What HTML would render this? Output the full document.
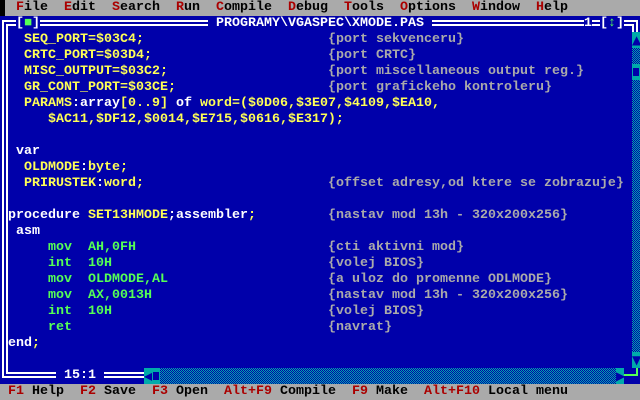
<!DOCTYPE html>
<html><head><meta charset="utf-8"><style>
body{margin:0;width:640px;height:400px;background:#0000AA;overflow:hidden;position:relative;font-family:"Liberation Mono","DejaVu Sans Mono",monospace;font-weight:bold;font-size:13.333px;}
.r{position:absolute;left:0;height:16px;line-height:16px;white-space:pre;}
.y{color:#FFFF55}.w{color:#FFFFFF}.g{color:#AAAAAA}.n{color:#55FF55}.red{color:#AA0000}.k{color:#000}
.ln{position:absolute;background:#fff;}
.chk{position:absolute;background-color:#0000AA;background-image:repeating-conic-gradient(#00AAAA 0 25%,#0000AA 0 50%);background-size:2px 2px;}
.cy{position:absolute;background:#00AAAA;color:#0000AA;text-align:center;line-height:16px;font-size:12px;font-family:"DejaVu Sans",sans-serif;}
</style></head><body>
<div class="r" style="top:0;width:640px;background:#AAAAAA;color:#000"><span style="position:absolute;left:16px"><span class="red">F</span>ile  <span class="red">E</span>dit  <span class="red">S</span>earch  <span class="red">R</span>un  <span class="red">C</span>ompile  <span class="red">D</span>ebug  <span class="red">T</span>ools  <span class="red">O</span>ptions  <span class="red">W</span>indow  <span class="red">H</span>elp</span></div>
<div style="position:absolute;left:0;top:0;width:5px;height:16px;background:#000"></div>

<!-- frame -->
<div class="ln" style="left:2px;top:20px;width:14px;height:2px"></div>
<div class="ln" style="left:6px;top:24px;width:10px;height:2px"></div>
<div class="ln" style="left:40px;top:20px;width:168px;height:2px"></div>
<div class="ln" style="left:40px;top:24px;width:168px;height:2px"></div>
<div class="ln" style="left:432px;top:20px;width:152px;height:2px"></div>
<div class="ln" style="left:432px;top:24px;width:152px;height:2px"></div>
<div class="ln" style="left:592px;top:20px;width:8px;height:2px"></div>
<div class="ln" style="left:592px;top:24px;width:8px;height:2px"></div>
<div class="ln" style="left:624px;top:20px;width:14px;height:2px"></div>
<div class="ln" style="left:624px;top:24px;width:10px;height:2px"></div>
<div class="ln" style="left:636px;top:20px;width:2px;height:12px"></div>
<div class="ln" style="left:632px;top:24px;width:2px;height:8px"></div>
<div class="ln" style="left:2px;top:20px;width:2px;height:358px"></div>
<div class="ln" style="left:6px;top:24px;width:2px;height:350px"></div>
<div class="ln" style="left:2px;top:376px;width:54px;height:2px"></div>
<div class="ln" style="left:6px;top:372px;width:50px;height:2px"></div>
<div class="ln" style="left:104px;top:376px;width:40px;height:2px"></div>
<div class="ln" style="left:104px;top:372px;width:40px;height:2px"></div>
<div class="r w" style="top:16px;left:16px">[<span class="n">■</span>]</div>
<div class="r w" style="top:16px;left:208px"> PROGRAMY\VGASPEC\XMODE.PAS </div>
<div class="r w" style="top:16px;left:584px">1</div>
<div class="r w" style="top:16px;left:600px">[<span class="n">↕</span>]</div>
<div class="r w" style="top:368px;left:56px"> 15:1 </div>

<!-- scrollbars -->
<div class="chk" style="left:632px;top:48px;width:8px;height:304px"></div>
<div class="cy" style="left:632px;top:32px;width:8px;height:16px">▲</div>
<div class="cy" style="left:632px;top:64px;width:8px;height:16px"><div style="position:absolute;left:1px;top:4px;width:6px;height:8px;background:#0000AA"></div></div>
<div class="cy" style="left:632px;top:352px;width:8px;height:16px">▼</div>
<div class="chk" style="left:144px;top:368px;width:480px;height:16px"></div>
<div class="cy" style="left:144px;top:368px;width:8px;height:16px">◀</div>
<div class="cy" style="left:152px;top:368px;width:8px;height:16px"><div style="position:absolute;left:1px;top:4px;width:6px;height:8px;background:#0000AA"></div></div>
<div class="cy" style="left:616px;top:368px;width:8px;height:16px">▶</div>
<div style="position:absolute;left:624px;top:374px;width:14px;height:2px;background:#55FF55"></div>
<div style="position:absolute;left:636px;top:368px;width:2px;height:8px;background:#55FF55"></div>

<!-- code -->
<div class="r y" style="top:32px;left:24px">SEQ_PORT=$03C4;</div><div class="r g" style="top:32px;left:328px">{port sekvenceru}</div>
<div class="r y" style="top:48px;left:24px">CRTC_PORT=$03D4;</div><div class="r g" style="top:48px;left:328px">{port CRTC}</div>
<div class="r y" style="top:64px;left:24px">MISC_OUTPUT=$03C2;</div><div class="r g" style="top:64px;left:328px">{port miscellaneous output reg.}</div>
<div class="r y" style="top:80px;left:24px">GR_CONT_PORT=$03CE;</div><div class="r g" style="top:80px;left:328px">{port grafickeho kontroleru}</div>
<div class="r y" style="top:96px;left:24px">PARAMS<span class="w">:array</span>[0..9]<span class="w"> of </span>word=($0D06,$3E07,$4109,$EA10,</div>
<div class="r y" style="top:112px;left:48px">$AC11,$DF12,$0014,$E715,$0616,$E317);</div>
<div class="r w" style="top:144px;left:16px">var</div>
<div class="r y" style="top:160px;left:24px">OLDMODE<span class="w">:</span>byte;</div>
<div class="r y" style="top:176px;left:24px">PRIRUSTEK<span class="w">:</span>word;</div><div class="r g" style="top:176px;left:328px">{offset adresy,od ktere se zobrazuje}</div>
<div class="r w" style="top:208px;left:8px">procedure <span class="y">SET13HMODE</span>;assembler<span class="y">;</span></div><div class="r g" style="top:208px;left:328px">{nastav mod 13h - 320x200x256}</div>
<div class="r w" style="top:224px;left:16px">asm</div>
<div class="r n" style="top:240px;left:48px">mov  AH,0FH</div><div class="r g" style="top:240px;left:328px">{cti aktivni mod}</div>
<div class="r n" style="top:256px;left:48px">int  10H</div><div class="r g" style="top:256px;left:328px">{volej BIOS}</div>
<div class="r n" style="top:272px;left:48px">mov  OLDMODE,AL</div><div class="r g" style="top:272px;left:328px">{a uloz do promenne ODLMODE}</div>
<div class="r n" style="top:288px;left:48px">mov  AX,0013H</div><div class="r g" style="top:288px;left:328px">{nastav mod 13h - 320x200x256}</div>
<div class="r n" style="top:304px;left:48px">int  10H</div><div class="r g" style="top:304px;left:328px">{volej BIOS}</div>
<div class="r n" style="top:320px;left:48px">ret</div><div class="r g" style="top:320px;left:328px">{navrat}</div>
<div class="r w" style="top:336px;left:8px">end<span class="y">;</span></div>

<div class="r" style="top:384px;width:640px;background:#AAAAAA;color:#000"> <span class="red">F1</span> Help  <span class="red">F2</span> Save  <span class="red">F3</span> Open  <span class="red">Alt+F9</span> Compile  <span class="red">F9</span> Make  <span class="red">Alt+F10</span> Local menu</div>
</body></html>
